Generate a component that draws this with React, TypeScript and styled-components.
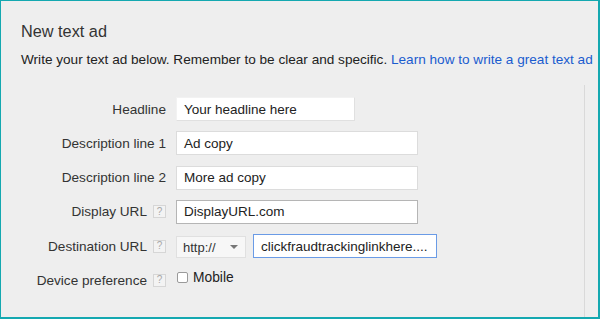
import React from "react";
import styled, { createGlobalStyle } from "styled-components";

const Global = createGlobalStyle`
  html, body { margin: 0; padding: 0; background: #eeeeee; }
  body { font-family: "Liberation Sans", Arial, sans-serif; }
  * { box-sizing: border-box; }
`;

const Frame = styled.div`
  width: 600px;
  height: 319px;
  background: #eeeeee;
  border-style: solid;
  border-color: #14a8b0;
  border-width: 1px 2px 2px 1px;
  display: flex;
  flex-direction: column;
  overflow: hidden;
  color: #333;
`;

const Header = styled.div`
  padding: 21px 0 0 20px;
`;

const Title = styled.h1`
  margin: 0;
  font-size: 16.3px;
  font-weight: normal;
  line-height: 19px;
  color: #333;
`;

const Intro = styled.p`
  margin: 10px 0 0;
  font-size: 13.6px;
  line-height: 18px;
  color: #222;
  white-space: nowrap;
`;

const Link = styled.a`
  color: #1a5ccf;
  text-decoration: none;
`;

const Panel = styled.div`
  flex: 1;
  margin: 16px 13px 0 0;
  border-right: 1px solid #d9d9d9;
  padding-top: 12px;
  display: flex;
  flex-direction: column;
  gap: 10.3px;
`;

const Row = styled.div`
  display: grid;
  grid-template-columns: 165px 1fr;
  column-gap: 10px;
  align-items: center;
  height: 24px;
`;

const Label = styled.div`
  display: flex;
  justify-content: flex-end;
  align-items: center;
  gap: 6px;
  font-size: 13.6px;
  color: #333;
  white-space: nowrap;
`;

const Help = styled.span`
  display: inline-flex;
  align-items: center;
  justify-content: center;
  width: 13px;
  height: 13px;
  border: 1px solid #d6d6d6;
  background: #f3f3f3;
  color: #a8a8a8;
  font-size: 10px;
  line-height: 1;
`;

const Controls = styled.div`
  display: flex;
  align-items: center;
  gap: 7px;
`;

const Input = styled.div<{ $w: number; $variant?: "plain" | "hover" | "focus" }>`
  width: ${(p) => p.$w}px;
  height: 24px;
  background: #fff;
  display: flex;
  align-items: center;
  padding-left: 7px;
  font-size: 13.5px;
  color: #222;
  white-space: nowrap;
  overflow: hidden;
  border: 1px solid
    ${(p) =>
      p.$variant === "focus" ? "#6a9be6" : p.$variant === "hover" ? "#b5b5b5" : "#dcdcdc"};
  ${(p) => (p.$variant === "plain" ? "border-color: #f2f2f2 #e0e0e0 #e0e0e0 #f2f2f2;" : "")}
`;

const Select = styled.div`
  width: 70px;
  height: 22px;
  margin-top: 2px;
  background: #f7f7f7;
  border: 1px solid #e0e0e0;
  display: flex;
  align-items: center;
  justify-content: space-between;
  padding: 0 6px 0 6px;
  font-size: 13px;
  color: #333;
`;

const Caret = styled.span`
  width: 0;
  height: 0;
  border-left: 4px solid transparent;
  border-right: 4px solid transparent;
  border-top: 4px solid #777;
  margin-right: 1px;
`;

const Check = styled.label`
  display: flex;
  align-items: center;
  gap: 5px;
  font-size: 13.8px;
  color: #222;
  margin-top: -5px;
`;

const Box = styled.span`
  width: 11px;
  height: 11px;
  border: 1px solid #9a9a9a;
  border-radius: 2px;
  background: #fff;
  margin-left: 1px;
`;

export default function App() {
  return (
    <>
      <Global />
      <Frame>
        <Header>
          <Title>New text ad</Title>
          <Intro>
            Write your text ad below. Remember to be clear and specific.{" "}
            <Link href="#">Learn how to write a great text ad</Link>
          </Intro>
        </Header>
        <Panel>
          <Row>
            <Label>Headline</Label>
            <Controls>
              <Input $w={179} $variant="plain">Your headline here</Input>
            </Controls>
          </Row>
          <Row>
            <Label>Description line 1</Label>
            <Controls>
              <Input $w={242}>Ad copy</Input>
            </Controls>
          </Row>
          <Row>
            <Label>Description line 2</Label>
            <Controls>
              <Input $w={242}>More ad copy</Input>
            </Controls>
          </Row>
          <Row>
            <Label>
              Display URL <Help>?</Help>
            </Label>
            <Controls>
              <Input $w={242} $variant="hover">DisplayURL.com</Input>
            </Controls>
          </Row>
          <Row>
            <Label>
              Destination URL <Help>?</Help>
            </Label>
            <Controls>
              <Select>
                http://
                <Caret />
              </Select>
              <Input $w={184} $variant="focus">clickfraudtrackinglinkhere....</Input>
            </Controls>
          </Row>
          <Row>
            <Label>
              Device preference <Help>?</Help>
            </Label>
            <Controls>
              <Check>
                <Box />
                Mobile
              </Check>
            </Controls>
          </Row>
        </Panel>
      </Frame>
    </>
  );
}
